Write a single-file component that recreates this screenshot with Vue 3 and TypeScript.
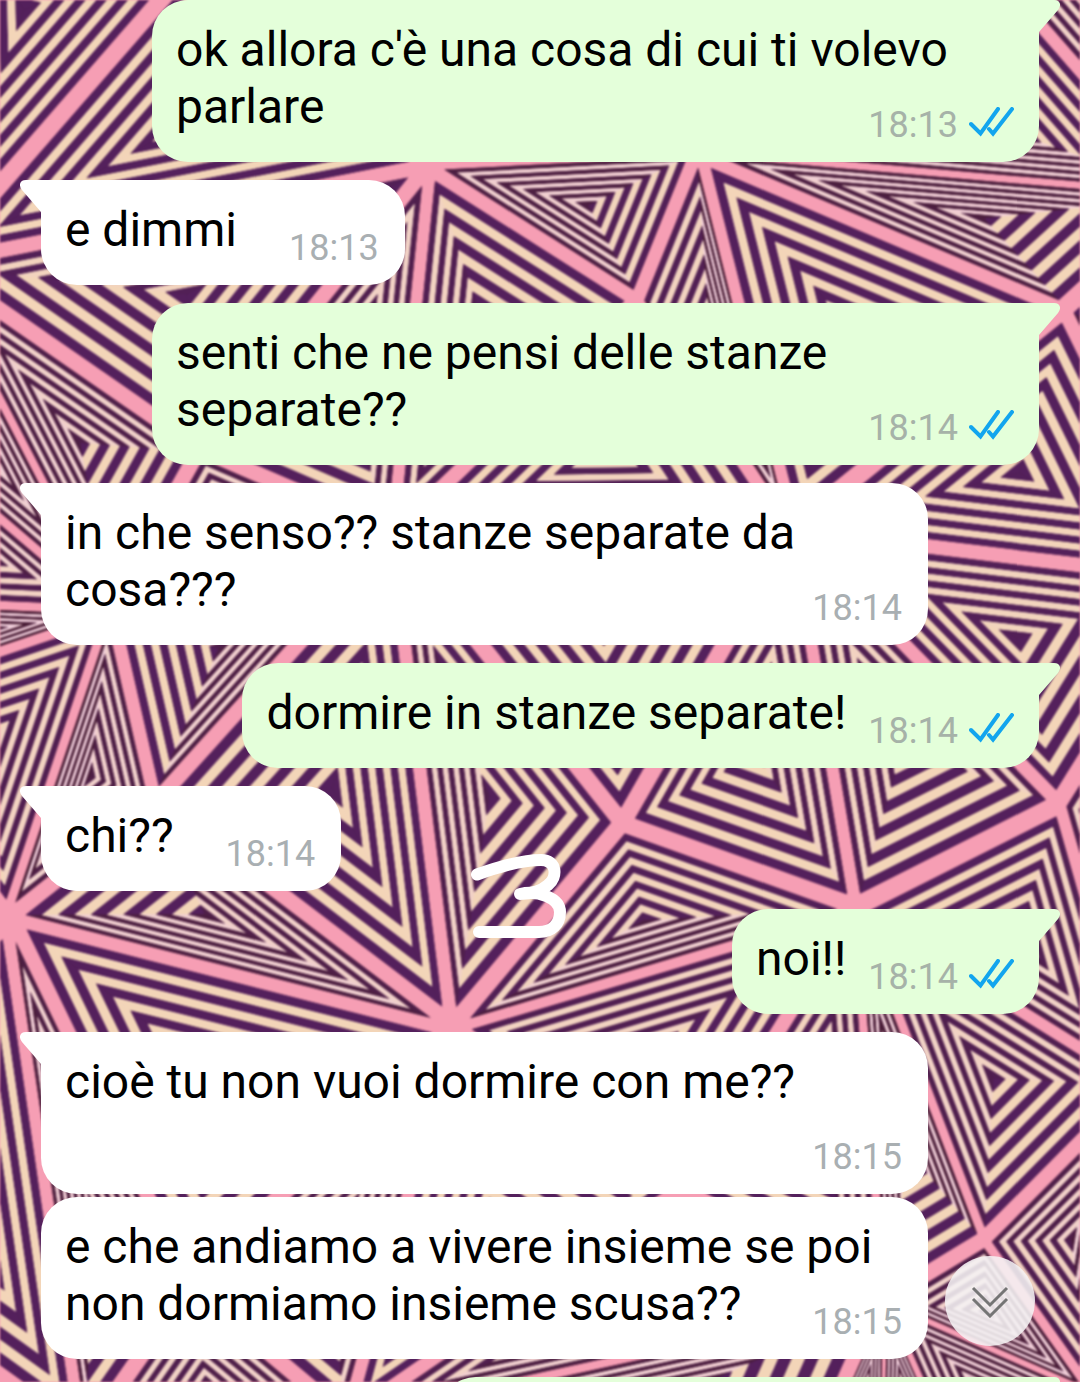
<script setup lang="ts">
interface Message {
  id: number
  text: string
  time: string
  sent: boolean
  tail: boolean
}

type Point = [number, number]

interface Face {
  key: string
  centre?: Point
}

interface Stripe {
  points: string
  fill: string
}

const messages: Message[] = [
  { id: 1, text: "ok allora c'è una cosa di cui ti volevo parlare", time: '18:13', sent: true, tail: true },
  { id: 2, text: 'e dimmi', time: '18:13', sent: false, tail: true },
  { id: 3, text: 'senti che ne pensi delle stanze separate??', time: '18:14', sent: true, tail: true },
  { id: 4, text: 'in che senso?? stanze separate da cosa???', time: '18:14', sent: false, tail: true },
  { id: 5, text: 'dormire in stanze separate!', time: '18:14', sent: true, tail: true },
  { id: 6, text: 'chi??', time: '18:14', sent: false, tail: true },
  { id: 7, text: 'noi!!', time: '18:14', sent: true, tail: true },
  { id: 8, text: 'cioè tu non vuoi dormire con me??', time: '18:15', sent: false, tail: true },
  { id: 9, text: 'e che andiamo a vivere insieme se poi non dormiamo insieme scusa??', time: '18:15', sent: false, tail: false },
  { id: 10, text: '', time: '', sent: true, tail: true },
]

// Wallpaper: a mesh of triangles, each one filled with nested stripes.
const nodes: Record<string, Point> = {
  A: [430, 166], B: [638, 298], C: [697, 152], D: [1066, 308], E: [8, 915],
  F: [453, 1028], G: [623, 825], H: [856, 908], I: [1060, 805], J: [984, 1242],
  K: [153, 800], L: [110, 612], M: [200, 452], N: [392, 535], O: [792, 530],
  P: [1190, 195], Q: [950, -80], R: [1200, 580], T: [1220, -60], V: [1090, 1392],
  W: [885, 1302], X: [1140, 1085], Y: [680, 1190], Z: [345, 1420],
  a: [-150, 700], b: [-250, 1200], c: [-70, 265], d: [-150, 390], e: [-150, 600],
  g: [230, -80], h: [-80, -155], k: [815, 1460], l: [882, 1460], m: [955, 1460],
  s: [85, 1440], t: [190, 1290],
}

const faces: Face[] = [
  { key: 'ABC' }, { key: 'BCO' }, { key: 'CDO' }, { key: 'CDP' }, { key: 'CQP', centre: [1028, 138] },
  { key: 'QPT' }, { key: 'DPR' }, { key: 'ODR' }, { key: 'ORI' }, { key: 'IRX' },
  { key: 'OIH' }, { key: 'OGH' }, { key: 'NBO' }, { key: 'NGO' }, { key: 'NGF' },
  { key: 'NKF' }, { key: 'KEF' }, { key: 'FGH' }, { key: 'HIX' }, { key: 'HXJ' },
  { key: 'HJW' }, { key: 'JWV' }, { key: 'JVX' }, { key: 'HYW' }, { key: 'HYF' },
  { key: 'FYZ' }, { key: 'YWZ' }, { key: 'FtZ' }, { key: 'EFt' }, { key: 'Est' },
  { key: 'stZ' }, { key: 'Ebs' }, { key: 'Eab' }, { key: 'ELa' }, { key: 'ELK' },
  { key: 'LNK' }, { key: 'LMN' }, { key: 'MNA' }, { key: 'ABN' }, { key: 'cMA' },
  { key: 'cML' }, { key: 'cdL' }, { key: 'deL' }, { key: 'eaL' }, { key: 'cgA' },
  { key: 'cgh', centre: [24, 10] }, { key: 'gAC' }, { key: 'gCQ' },
  { key: 'ZWk' }, { key: 'Wkl' }, { key: 'Wlm' }, { key: 'WmV' },
]

const RINGS = 11
const DARK = [[74, 30, 54], [84, 32, 92]]
const LIGHT = [[239, 204, 218], [243, 213, 184]]

function toPoints(points: Point[]): string {
  return points.map(([x, y]) => `${x.toFixed(1)},${y.toFixed(1)}`).join(' ')
}

// Thin stripes are rosy, wide ones turn to violet and cream.
function tint(pair: number[][], width: number): string {
  const t = Math.min(1, Math.max(0, (width - 3) / 5))
  return `rgb(${pair[0].map((v, i) => Math.round(v + (pair[1][i] - v) * t)).join(',')})`
}

function stripes(face: Face): Stripe[] {
  const corners = face.key.split('').map((k) => nodes[k])
  const centre: Point = face.centre ?? [
    (corners[0][0] + corners[1][0] + corners[2][0]) / 3,
    (corners[0][1] + corners[1][1] + corners[2][1]) / 3,
  ]
  const [cx, cy] = centre
  const result: Stripe[] = []
  for (let i = 0; i < RINGS; i++) {
    const scale = 0.91 * (1 - i / RINGS)
    const pair = i % 2 === 0 ? DARK : LIGHT
    const ring = corners.map(([x, y]): Point => [cx + (x - cx) * scale, cy + (y - cy) * scale])
    result.push({ points: toPoints(ring), fill: tint(pair, 5) })
    for (let side = 0; side < 3; side++) {
      const p = corners[side]
      const q = corners[(side + 1) % 3]
      const length = Math.hypot(q[0] - p[0], q[1] - p[1])
      const distance = Math.abs((q[0] - p[0]) * (p[1] - cy) - (p[0] - cx) * (q[1] - p[1])) / length
      result.push({
        points: toPoints([centre, ring[side], ring[(side + 1) % 3]]),
        fill: tint(pair, distance / RINGS),
      })
    }
  }
  return result
}

const polygons = faces.flatMap(stripes)
</script>

<template>
  <main class="chat">
    <svg class="wallpaper" viewBox="0 0 1080 1382" preserveAspectRatio="xMidYMin slice" aria-hidden="true">
      <polygon v-for="(p, i) in polygons" :key="i" :points="p.points" :fill="p.fill" />
    </svg>

    <div class="messages">
      <article
        v-for="m in messages"
        :key="m.id"
        class="bubble"
        :class="{ sent: m.sent, received: !m.sent, tailed: m.tail, upcoming: !m.text }"
      >
        <svg v-if="m.tail" class="tail" viewBox="0 0 42 33" aria-hidden="true">
          <path d="M42 0H6C0 0 -2 5 2 10L21 32V33H42Z" />
        </svg>
        <span class="text">{{ m.text }}</span>
        <span v-if="m.time" class="meta">
          <time>{{ m.time }}</time>
          <svg v-if="m.sent" class="ticks" viewBox="0 0 46 30" role="img" aria-label="Letto">
            <path d="M2 17L11.500 26.500L29 2M20 22L24 26.500L43 2" />
          </svg>
        </span>
      </article>
    </div>

    <svg class="doodle" viewBox="0 0 120 110" role="img" aria-label="3">
      <path d="M17 34.500C38 27 63 20 81 20C97 20 98 37 88 45C80 52 69 54 60 54C78 50 100 58 100 72C100 84 92 92 79 92H19" />
    </svg>

    <button class="scroll-down" type="button" aria-label="Vai in fondo">
      <svg viewBox="0 0 40 34" aria-hidden="true">
        <path d="M3 4L20 21L37 4M3 15L20 32L37 15" />
      </svg>
    </button>
  </main>
</template>

<style>
body {
  margin: 0;
}
</style>

<style scoped>
.chat {
  position: relative;
  height: 100vh;
  overflow: hidden;
  background: #f69eb4;
  font-family: Roboto, 'Liberation Sans', sans-serif;
}

.wallpaper {
  position: absolute;
  inset: 0;
  width: 100%;
  height: 100%;
  filter: blur(1px);
}

.messages {
  position: relative;
  display: flex;
  flex-direction: column;
  gap: 18px;
  padding: 0 41px;
}

.bubble {
  position: relative;
  box-sizing: border-box;
  display: flow-root;
  flex: none;
  max-width: calc(100% - 111px);
  min-height: 105px;
  padding: 21px 24px 27px;
  border-radius: 36px;
  color: #000000;
  font-size: 48px;
  line-height: 57px;
}

.received {
  align-self: flex-start;
  background: #ffffff;
  fill: #ffffff;
}

.sent {
  align-self: flex-end;
  background: #e4ffda;
  fill: #e4ffda;
}

.received.tailed {
  border-top-left-radius: 0;
}

.sent.tailed {
  border-top-right-radius: 0;
}

.bubble:not(.tailed) {
  margin-top: -15px;
}

.upcoming {
  width: 60%;
}

.tail {
  position: absolute;
  top: 0;
  width: 42px;
  height: 33px;
}

.received .tail {
  left: -21px;
}

.sent .tail {
  right: -21px;
  transform: scaleX(-1);
}

.meta {
  float: right;
  display: flex;
  align-items: flex-start;
  gap: 11px;
  margin: 29px 2px -8px 52px;
  color: #a9afb2;
  font-size: 36px;
  line-height: 36px;
}

.sent .meta {
  margin-right: 0;
  margin-left: 22px;
  color: #a6b2a8;
}

.ticks {
  width: 46px;
  height: 30px;
  fill: none;
  stroke: #12a5ee;
  stroke-width: 4;
  stroke-linecap: round;
}

.doodle {
  position: absolute;
  top: 840px;
  left: 460px;
  width: 120px;
  height: 110px;
  fill: none;
  stroke: #ffffff;
  stroke-width: 12;
  stroke-linecap: round;
  stroke-linejoin: round;
}

.scroll-down {
  position: absolute;
  right: 45px;
  bottom: 36px;
  display: flex;
  align-items: center;
  justify-content: center;
  width: 90px;
  height: 90px;
  padding: 0;
  border: 0;
  border-radius: 50%;
  background: rgba(245, 243, 244, 0.88);
}

.scroll-down svg {
  width: 40px;
  height: 34px;
  fill: none;
  stroke: #757575;
  stroke-width: 3;
}
</style>
